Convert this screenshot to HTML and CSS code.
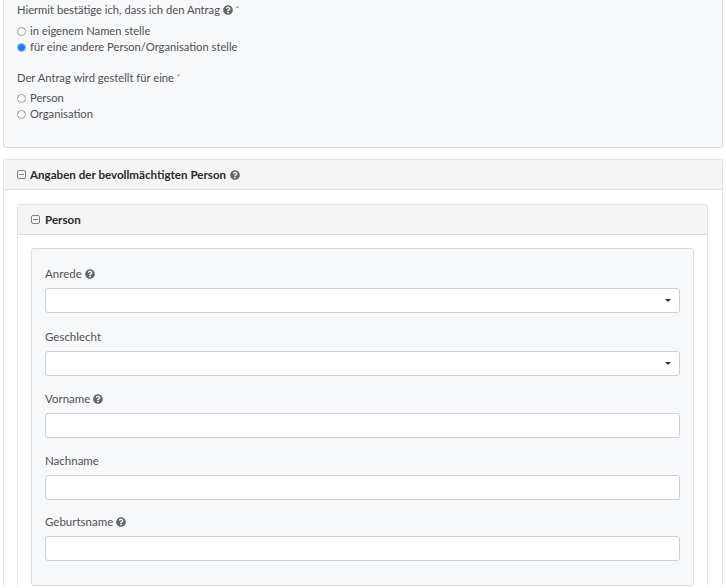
FILE: index.html
```html
<!DOCTYPE html>
<html>
<head>
  <title>Antrag</title>
  <link rel="stylesheet" href="styles.css">
</head>
<body>

  <svg class="defs" width="0" height="0">
    <symbol id="help" viewBox="0 0 512 512">
      <path d="M504 256c0 136.997-111.043 248-248 248S8 392.997 8 256C8 119.083 119.043 8 256 8s248 111.083 248 248zM262.655 90c-54.497 0-89.255 22.957-116.549 63.758-3.536 5.286-2.353 12.415 2.715 16.258l34.699 26.31c5.205 3.947 12.621 3.008 16.665-2.122 17.864-22.658 30.113-35.797 57.303-35.797 20.429 0 45.698 13.148 45.698 32.958 0 14.976-12.363 22.667-32.534 33.976C247.128 238.528 216 254.941 216 296v4c0 6.627 5.373 12 12 12h56c6.627 0 12-5.373 12-12v-1.333c0-28.462 83.186-29.647 83.186-106.667 0-58.002-60.165-102-116.531-102zM256 338c-25.365 0-46 20.635-46 46 0 25.364 20.635 46 46 46s46-20.636 46-46c0-25.365-20.635-46-46-46z"/>
    </symbol>
    <symbol id="collapse" viewBox="0 0 9 9">
      <rect x="0.5" y="0.5" width="8" height="8" rx="1.5" fill="none" stroke="currentColor"/>
      <line x1="2" y1="4.5" x2="7" y2="4.5" stroke="currentColor"/>
    </symbol>
  </svg>

  <div class="well top">
    <div class="question">Hiermit bestätige ich, dass ich den Antrag <svg class="help"><use href="#help"/></svg> <span class="req">*</span></div>
    <label class="radio"><input type="radio" name="a"> in eigenem Namen stelle</label>
    <label class="radio"><input type="radio" name="a" checked> für eine andere Person/Organisation stelle</label>
    <div class="question second">Der Antrag wird gestellt für eine <span class="req">*</span></div>
    <label class="radio"><input type="radio" name="b"> Person</label>
    <label class="radio"><input type="radio" name="b"> Organisation</label>
  </div>

  <div class="card">
    <div class="card-head">
      <svg class="toggle"><use href="#collapse"/></svg>
      <span>Angaben der bevollmächtigten Person</span>
      <svg class="help"><use href="#help"/></svg>
    </div>
    <div class="card-body">

      <div class="card inner">
        <div class="card-head">
          <svg class="toggle"><use href="#collapse"/></svg>
          <span>Person</span>
        </div>
        <div class="card-body">
          <div class="well form">
            <div class="field">
              <label>Anrede <svg class="help"><use href="#help"/></svg></label>
              <div class="select"></div>
            </div>
            <div class="field">
              <label>Geschlecht</label>
              <div class="select"></div>
            </div>
            <div class="field">
              <label>Vorname <svg class="help"><use href="#help"/></svg></label>
              <input type="text">
            </div>
            <div class="field">
              <label>Nachname</label>
              <input type="text">
            </div>
            <div class="field">
              <label>Geburtsname <svg class="help"><use href="#help"/></svg></label>
              <input type="text">
            </div>
          </div>
        </div>
      </div>

    </div>
  </div>

</body>
</html>
```

FILE: styles.css
```css
body {
  margin: 0;
  padding: 0 3px;
  font-family: "Lato", "Liberation Sans", sans-serif;
  font-size: 11.5px;
  line-height: 16px;
  color: #505050;
  background: #fff;
  height: 588px;
  overflow: hidden;
}

.defs {
  position: absolute;
}

.well {
  background: #f7f8fa;
  border: 1px solid #d8dadd;
  border-radius: 3px;
}

.top {
  border-top: 0;
  border-radius: 0 0 3px 3px;
  padding: 1px 13px 0;
  height: 148px;
  box-sizing: border-box;
  margin-bottom: 11px;
  font-size: 11.2px;
}

.question {
  margin-bottom: 5px;
}

.question.second {
  margin-top: 14px;
  margin-bottom: 4px;
}

.req {
  color: #d9534f;
  font-size: 8px;
  vertical-align: 2px;
}

.help {
  width: 10px;
  height: 10px;
  fill: #62686e;
  vertical-align: -1px;
}

.radio {
  display: flex;
  align-items: center;
  gap: 4px;
  height: 16px;
}

.radio input {
  appearance: none;
  box-sizing: border-box;
  width: 9px;
  height: 9px;
  margin: 0;
  background: #fff;
  border: 1px solid #9c9c9c;
  border-radius: 50%;
}

.radio input:checked {
  background: #1f7bf2;
  border-color: #8dbcf5;
}

.card {
  border: 1px solid #e2e3e5;
  border-radius: 3px;
  border-bottom: 0;
}

.card-head {
  background: #f5f5f5;
  border-bottom: 1px solid #dddee0;
  height: 29px;
  display: flex;
  align-items: center;
  gap: 4px;
  padding-left: 13px;
  font-size: 11.6px;
  font-weight: 700;
  color: #2b2b2b;
}

.inner .card-head {
  gap: 5px;
}

.toggle {
  width: 9px;
  height: 9px;
  color: #76838f;
  flex: none;
}

.card-body {
  padding: 14px 14px 0 13px;
}

.inner .card-body {
  padding: 13px 13px 0;
}

.form {
  padding: 17px 13px 24px;
}

.field {
  margin-bottom: 15px;
}

.field:first-child {
  margin-bottom: 16px;
}

.field:nth-child(4) {
  margin-bottom: 14px;
}

.field:last-child {
  margin-bottom: 0;
}

.field label {
  display: block;
  height: 16px;
  margin-bottom: 6px;
}

.field input,
.select {
  display: block;
  box-sizing: border-box;
  width: 100%;
  height: 25px;
  margin: 0;
  padding: 0 8px;
  background: #fff;
  border: 1px solid #ccd0d5;
  border-radius: 3px;
  position: relative;
}

/* little arrow of the dropdown */
.select::after {
  content: "";
  position: absolute;
  right: 8px;
  top: 10px;
  border-top: 3px solid #333;
  border-left: 3px solid transparent;
  border-right: 3px solid transparent;
}
```
